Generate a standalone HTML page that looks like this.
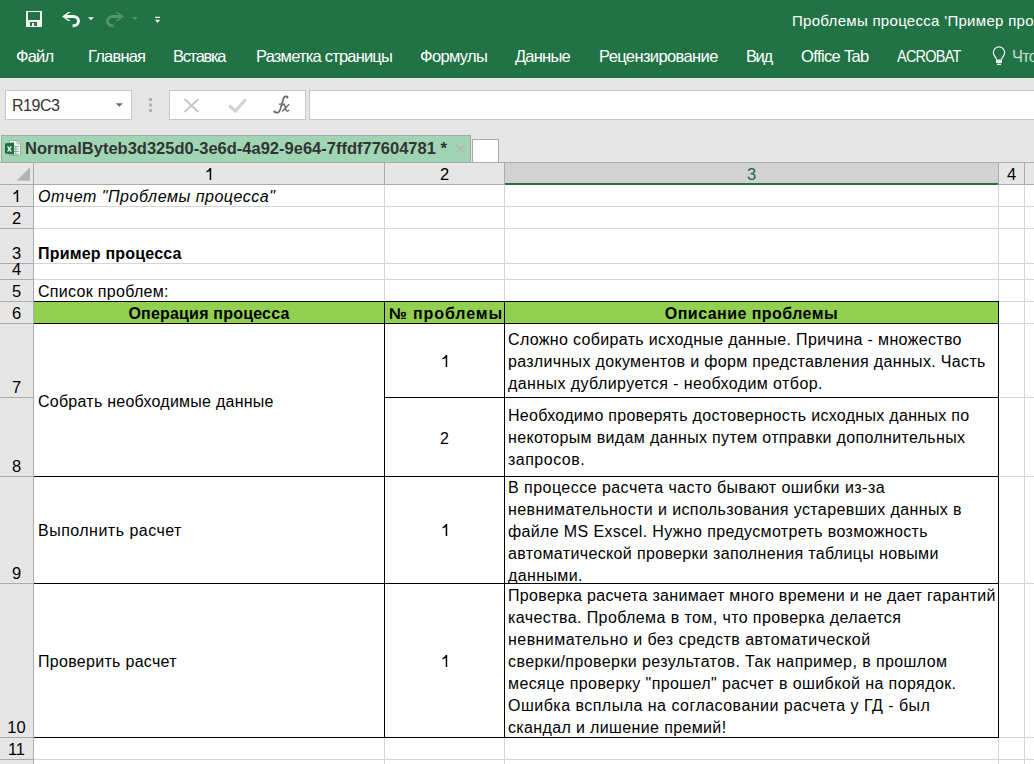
<!DOCTYPE html>
<html><head><meta charset="utf-8">
<style>
*{margin:0;padding:0;box-sizing:border-box}
html,body{width:1034px;height:764px;overflow:hidden;background:#e6e6e6;font-family:"Liberation Sans",sans-serif}
.a{position:absolute}
.t{position:absolute;white-space:pre}
.menu{color:#fff;font-size:16.5px;letter-spacing:-0.8px;top:46px;line-height:20px}
.cell{font-size:16px;color:#000;letter-spacing:0.3px;line-height:22px}
.ch{position:absolute;font-size:16.5px;color:#000;top:164px;line-height:21px;text-align:center}
.rh{position:absolute;font-size:16.5px;color:#000;left:0;width:33px;text-align:center;line-height:20px}
</style></head><body>
<div class="a" style="left:0;top:0;width:1034px;height:78px;background:#217346"></div>
<svg class="a" style="left:0;top:0" width="180" height="36">
<path fill="#f4f4f4" fill-rule="evenodd" d="M26 11h16v16h-16z M28 12h12v8h-12z M30 22h7v4h-7z"/>
<path fill="none" stroke="#f4f4f4" stroke-width="3" d="M66.4 16.4H73.5A5 4.7 0 0 1 73.5 25.8H72.6"/>
<path fill="#f4f4f4" d="M62 16.4L68.2 11.9H70.8L66.4 14.9H67V17.9H66.4L70.8 20.9H68.2Z"/>
<path fill="#f4f4f4" d="M88 17.2h6l-3 3z"/>
<path fill="#f4f4f4" d="M32 23h2.1v3h-2.1z"/>
<path fill="none" stroke="#55946d" stroke-width="3" d="M119.6 16.4H112.5A5 4.7 0 0 0 112.5 25.8H113.4"/>
<path fill="#55946d" d="M124 16.4L117.8 11.9H115.2L119.6 14.9H119V17.9H119.6L115.2 20.9H117.8Z"/>
<path fill="#55946d" d="M132 17h6l-3 3z"/>
<path fill="#f4f4f4" d="M155 16.7h5v1.3h-5z M155 19.8h5l-2.5 3.2z"/>
</svg>
<div class="t" style="left:792px;top:11px;color:#fff;font-size:15px;letter-spacing:0.3px;line-height:20px">Проблемы процесса 'Пример процесса'</div>
<div class="t menu" style="left:16px;">Файл</div>
<div class="t menu" style="left:88px;">Главная</div>
<div class="t menu" style="left:173px;letter-spacing:-1.33px">Вставка</div>
<div class="t menu" style="left:256px;">Разметка страницы</div>
<div class="t menu" style="left:420px;letter-spacing:-0.65px">Формулы</div>
<div class="t menu" style="left:515px;">Данные</div>
<div class="t menu" style="left:599px;letter-spacing:-0.62px">Рецензирование</div>
<div class="t menu" style="left:746px;letter-spacing:-1.4px">Вид</div>
<div class="t menu" style="left:801px;letter-spacing:-0.6px">Office Tab</div>
<div class="t menu" style="left:897px;letter-spacing:-0.9px;transform:scaleX(0.88);transform-origin:0 0">ACROBAT</div>
<div class="t menu" style="left:1012px;color:#c9dbcf">Что</div>
<svg class="a" style="left:988px;top:44px" width="22" height="24">
<path fill="none" stroke="#f4f4f4" stroke-width="1.2" d="M8.6 15.6C8.2 13.4 5.3 11.6 5.3 8.6A5.7 5.7 0 0 1 16.7 8.6C16.7 11.6 13.8 13.4 13.4 15.6"/>
<path fill="#f4f4f4" d="M8 15.4h6v3.6h-6z M9 19.8h4v1.2h-4z"/>
</svg>
<div class="a" style="left:5px;top:90px;width:127px;height:30px;background:#fff;border:1px solid #c6c6c6"></div>
<div class="t" style="left:12px;top:96px;font-size:16px;letter-spacing:-0.45px;line-height:19px;color:#333">R19C3</div>
<svg class="a" style="left:110px;top:96px" width="20" height="16"><path fill="#666" d="M5.8 7.2h7l-3.5 3.5z"/></svg>
<svg class="a" style="left:140px;top:92px" width="20" height="24"><path fill="#b1b1b1" d="M9 6h3v3h-3z M9 11.5h3v3h-3z M9 17h3v3h-3z"/></svg>
<div class="a" style="left:169px;top:90px;width:137px;height:30px;background:#fff;border:1px solid #c6c6c6"></div>
<svg class="a" style="left:170px;top:91px" width="135" height="28">
<path fill="none" stroke="#c6c6c6" stroke-width="1.8" d="M14.5 8L28.5 21 M28.5 8L14.5 21"/>
<path fill="none" stroke="#d2d2d2" stroke-width="3" stroke-linecap="round" stroke-linejoin="round" d="M60.2 15.4L65.2 20.2L75 9.2"/>
</svg>
<svg class="a" style="left:270px;top:92px" width="24" height="24">
<g fill="none" stroke="#6a6a6a" stroke-linecap="round">
<path stroke-width="1.7" d="M17.2 4.6C15 3.6 13.8 5 13.2 7.6L10.2 17.6C9.4 20.4 7.6 21.4 5 20.2"/>
<path stroke-width="1.3" d="M9.2 12.2H14.6"/>
<path stroke-width="1.5" d="M12.4 12.6C13.8 12 14.6 12.8 15.1 14.6L16 18C16.4 19.2 17.4 19.4 18.8 18.2"/>
<path stroke-width="1.4" d="M18.8 12.6L12.6 19"/>
</g>
<circle cx="17.2" cy="5.2" r="1.2" fill="#6a6a6a"/>
<circle cx="4.6" cy="19.6" r="1.2" fill="#6a6a6a"/>
</svg>
<div class="a" style="left:309px;top:90px;width:730px;height:30px;background:#fff;border:1px solid #c6c6c6"></div>
<div class="a" style="left:1px;top:135px;width:470px;height:28px;background:#a0d5b4;border:1px solid #a8a8a8;border-bottom:none"></div>
<svg class="a" style="left:4px;top:139px" width="18" height="18">
<path fill="#fdfdfd" stroke="#9a9a9a" stroke-width="0.8" d="M5.5 1.5H13L16.5 5V16.5H5.5Z"/>
<path fill="none" stroke="#9a9a9a" stroke-width="0.7" d="M13 1.5V5H16.5"/>
<path fill="none" stroke="#7fb18f" stroke-width="1" d="M9 7.5h6 M9 10h6 M9 12.5h6 M9 15h6 M11.8 6.5v9"/>
<path fill="#1d7044" d="M1 4.5L10 3.2V15.8L1 14.5Z"/>
<path fill="none" stroke="#fff" stroke-width="1.3" d="M3.6 7.4L7.2 12.6 M7.2 7.4L3.6 12.6"/>
</svg>
<div class="t" style="left:25px;top:139px;font-size:16.5px;line-height:18px;font-weight:bold;color:#333">NormalByteb3d325d0-3e6d-4a92-9e64-7ffdf77604781 *</div>
<svg class="a" style="left:452px;top:141px" width="16" height="16"><path fill="none" stroke="#b3b3b3" stroke-width="1.6" d="M4.2 4.2L12.8 11.6 M12.8 4.2L4.2 11.6"/></svg>
<div class="a" style="left:472px;top:139px;width:27px;height:24px;background:#fff;border:1px solid #a8a8a8;border-bottom:none"></div>
<div class="a" style="left:0;top:162px;width:1034px;height:602px;background:#fff"></div>
<div class="a" style="left:0;top:162px;width:1034px;height:22px;background:#e6e6e6"></div>
<div class="a" style="left:505px;top:162px;width:493px;height:22px;background:#d2d2d2"></div>
<div class="a" style="left:0;top:162px;width:33px;height:602px;background:#e6e6e6"></div>
<div class="a" style="left:34px;top:302px;width:964px;height:21px;background:#92d050"></div>
<div class="t cell" style="left:38px;top:186px;font-style:italic;letter-spacing:0.53px">Отчет "Проблемы процесса"</div>
<div class="t cell" style="left:38px;top:243px;font-weight:bold;letter-spacing:0.2px">Пример процесса</div>
<div class="t cell" style="left:38px;top:281px;">Список проблем:</div>
<div class="t cell" style="left:34px;width:350px;text-align:center;top:303px;font-weight:bold;letter-spacing:0.2px">Операция процесса</div>
<div class="t cell" style="left:387px;width:118px;text-align:center;top:303px;font-weight:bold;letter-spacing:0.9px">№ проблемы</div>
<div class="t cell" style="left:505px;width:493px;text-align:center;top:303px;font-weight:bold;letter-spacing:0.45px">Описание проблемы</div>
<div class="t cell" style="left:38px;top:391px;letter-spacing:0.25px">Собрать необходимые данные</div>
<div class="t cell" style="left:38px;top:520px;letter-spacing:0.48px">Выполнить расчет</div>
<div class="t cell" style="left:38px;top:651px;">Проверить расчет</div>
<svg class="a" style="left:442px;top:355px" width="7" height="12"><path fill="#000" d="M3.7 0H5.2V12H3.7V2.7C3 3.4 1.8 4 0.5 4.4V3C2 2.4 3.2 1.3 3.7 0Z"/></svg>
<div class="t cell" style="left:385px;width:119px;text-align:center;top:428px;letter-spacing:0">2</div>
<svg class="a" style="left:442px;top:524px" width="7" height="12"><path fill="#000" d="M3.7 0H5.2V12H3.7V2.7C3 3.4 1.8 4 0.5 4.4V3C2 2.4 3.2 1.3 3.7 0Z"/></svg>
<svg class="a" style="left:442px;top:655px" width="7" height="12"><path fill="#000" d="M3.7 0H5.2V12H3.7V2.7C3 3.4 1.8 4 0.5 4.4V3C2 2.4 3.2 1.3 3.7 0Z"/></svg>
<div class="t cell" style="left:508px;top:329px;letter-spacing:0.339px">Сложно собирать исходные данные. Причина - множество</div>
<div class="t cell" style="left:508px;top:351px;letter-spacing:0.337px">различных документов и форм представления данных. Часть</div>
<div class="t cell" style="left:508px;top:373px;letter-spacing:0.411px">данных дублируется - необходим отбор.</div>
<div class="t cell" style="left:508px;top:405px;letter-spacing:0.308px">Необходимо проверять достоверность исходных данных по</div>
<div class="t cell" style="left:508px;top:427px;letter-spacing:0.339px">некоторым видам данных путем отправки дополнительных</div>
<div class="t cell" style="left:508px;top:449px;letter-spacing:0.487px">запросов.</div>
<div class="t cell" style="left:508px;top:477px;letter-spacing:0.463px">В процессе расчета часто бывают ошибки из-за</div>
<div class="t cell" style="left:508px;top:499px;letter-spacing:0.398px">невнимательности и использования устаревших данных в</div>
<div class="t cell" style="left:508px;top:521px;letter-spacing:0.364px">файле MS Exscel. Нужно предусмотреть возможность</div>
<div class="t cell" style="left:508px;top:543px;letter-spacing:0.352px">автоматической проверки заполнения таблицы новыми</div>
<div class="t cell" style="left:508px;top:565px;letter-spacing:0.386px">данными.</div>
<div class="t cell" style="left:508px;top:585px;letter-spacing:0.323px">Проверка расчета занимает много времени и не дает гарантий</div>
<div class="t cell" style="left:508px;top:607px;letter-spacing:0.409px">качества. Проблема в том, что проверка делается</div>
<div class="t cell" style="left:508px;top:629px;letter-spacing:0.446px">невнимательно и без средств автоматической</div>
<div class="t cell" style="left:508px;top:651px;letter-spacing:0.408px">сверки/проверки результатов. Так например, в прошлом</div>
<div class="t cell" style="left:508px;top:673px;letter-spacing:0.404px">месяце проверку "прошел" расчет в ошибкой на порядок.</div>
<div class="t cell" style="left:508px;top:695px;letter-spacing:0.479px">Ошибка всплыла на согласовании расчета у ГД - был</div>
<div class="t cell" style="left:508px;top:717px;letter-spacing:0.362px">скандал и лишение премий!</div>
<div class="a" style="left:34px;top:206px;width:1000px;height:1px;background:#d4d4d4"></div>
<div class="a" style="left:0;top:206px;width:33px;height:1px;background:#ababab"></div>
<div class="a" style="left:34px;top:228px;width:1000px;height:1px;background:#d4d4d4"></div>
<div class="a" style="left:0;top:228px;width:33px;height:1px;background:#ababab"></div>
<div class="a" style="left:34px;top:263px;width:1000px;height:1px;background:#d4d4d4"></div>
<div class="a" style="left:0;top:263px;width:33px;height:1px;background:#ababab"></div>
<div class="a" style="left:34px;top:279px;width:1000px;height:1px;background:#d4d4d4"></div>
<div class="a" style="left:0;top:279px;width:33px;height:1px;background:#ababab"></div>
<div class="a" style="left:34px;top:301px;width:1000px;height:1px;background:#d4d4d4"></div>
<div class="a" style="left:0;top:301px;width:33px;height:1px;background:#ababab"></div>
<div class="a" style="left:34px;top:323px;width:1000px;height:1px;background:#d4d4d4"></div>
<div class="a" style="left:0;top:323px;width:33px;height:1px;background:#ababab"></div>
<div class="a" style="left:385px;top:397px;width:649px;height:1px;background:#d4d4d4"></div>
<div class="a" style="left:0;top:397px;width:33px;height:1px;background:#ababab"></div>
<div class="a" style="left:34px;top:476px;width:1000px;height:1px;background:#d4d4d4"></div>
<div class="a" style="left:0;top:476px;width:33px;height:1px;background:#ababab"></div>
<div class="a" style="left:34px;top:583px;width:1000px;height:1px;background:#d4d4d4"></div>
<div class="a" style="left:0;top:583px;width:33px;height:1px;background:#ababab"></div>
<div class="a" style="left:34px;top:737px;width:1000px;height:1px;background:#d4d4d4"></div>
<div class="a" style="left:0;top:737px;width:33px;height:1px;background:#ababab"></div>
<div class="a" style="left:34px;top:759px;width:1000px;height:1px;background:#d4d4d4"></div>
<div class="a" style="left:0;top:759px;width:33px;height:1px;background:#ababab"></div>
<div class="a" style="left:384px;top:185px;width:1px;height:579px;background:#d4d4d4"></div>
<div class="a" style="left:384px;top:162px;width:1px;height:22px;background:#ababab"></div>
<div class="a" style="left:504px;top:185px;width:1px;height:579px;background:#d4d4d4"></div>
<div class="a" style="left:504px;top:162px;width:1px;height:22px;background:#ababab"></div>
<div class="a" style="left:998px;top:185px;width:1px;height:579px;background:#d4d4d4"></div>
<div class="a" style="left:998px;top:162px;width:1px;height:22px;background:#ababab"></div>
<div class="a" style="left:1024px;top:185px;width:1px;height:579px;background:#d4d4d4"></div>
<div class="a" style="left:1024px;top:162px;width:1px;height:22px;background:#ababab"></div>
<div class="a" style="left:0;top:162px;width:1034px;height:1px;background:#ababab"></div>
<div class="a" style="left:0;top:184px;width:1034px;height:1px;background:#ababab"></div>
<div class="a" style="left:33px;top:162px;width:1px;height:602px;background:#ababab"></div>
<div class="a" style="left:505px;top:183px;width:493px;height:2px;background:#217346"></div>
<svg class="a" style="left:0;top:163px" width="33" height="21"><path d="M30 4.2v13.6h-13.4z" fill="#b4b4b4"/></svg>
<div class="a" style="left:34px;top:301px;width:965px;height:1px;background:#000"></div>
<div class="a" style="left:34px;top:323px;width:965px;height:1px;background:#000"></div>
<div class="a" style="left:384px;top:397px;width:615px;height:1px;background:#000"></div>
<div class="a" style="left:34px;top:476px;width:965px;height:1px;background:#000"></div>
<div class="a" style="left:34px;top:583px;width:965px;height:1px;background:#000"></div>
<div class="a" style="left:34px;top:737px;width:965px;height:1px;background:#000"></div>
<div class="a" style="left:384px;top:301px;width:1px;height:437px;background:#000"></div>
<div class="a" style="left:504px;top:301px;width:1px;height:437px;background:#000"></div>
<div class="a" style="left:998px;top:301px;width:1px;height:437px;background:#000"></div>
<svg class="a" style="left:206px;top:168px" width="7" height="12"><path fill="#000" d="M3.7 0H5.2V12H3.7V2.7C3 3.4 1.8 4 0.5 4.4V3C2 2.4 3.2 1.3 3.7 0Z"/></svg>
<div class="ch" style="left:385px;width:119px;">2</div>
<div class="ch" style="left:505px;width:493px;color:#1d6b40;">3</div>
<div class="ch" style="left:999px;width:25px;">4</div>
<div class="ch" style="left:1025px;width:26px">5</div>
<svg class="a" style="left:13px;top:190px" width="7" height="12"><path fill="#000" d="M3.7 0H5.2V12H3.7V2.7C3 3.4 1.8 4 0.5 4.4V3C2 2.4 3.2 1.3 3.7 0Z"/></svg>
<div class="rh" style="top:208px">2</div>
<div class="rh" style="top:243px">3</div>
<div class="rh" style="top:259px">4</div>
<div class="rh" style="top:281px">5</div>
<div class="rh" style="top:303px">6</div>
<div class="rh" style="top:377px">7</div>
<div class="rh" style="top:456px">8</div>
<div class="rh" style="top:563px">9</div>
<div class="rh" style="top:717px">10</div>
<div class="rh" style="top:739px">11</div>
</body></html>
